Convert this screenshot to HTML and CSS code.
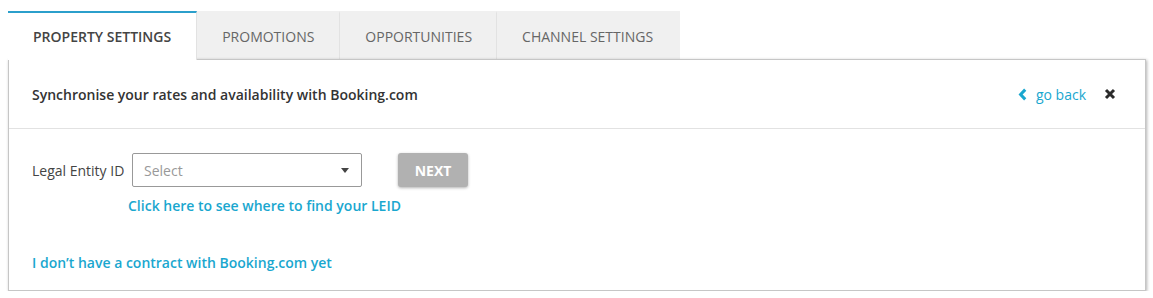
FILE: index.html
```html
<!DOCTYPE html>
<html>
<head>
<meta charset="utf-8">
<link rel="stylesheet" href="styles.css">
</head>
<body>
<div class="page">
  <nav class="tabs">
    <div class="tab active">PROPERTY SETTINGS</div>
    <div class="tab">PROMOTIONS</div>
    <div class="tab">OPPORTUNITIES</div>
    <div class="tab">CHANNEL SETTINGS</div>
  </nav>
  <section class="panel">
    <header class="panel-head">
      <h1 class="title">Synchronise your rates and availability with Booking.com</h1>
      <div class="actions">
        <a class="back" href="#">
          <svg class="chev" width="9" height="13" viewBox="0 0 9 13"><path d="M7.2 1.6 L2.6 6.5 L7.2 11.4" fill="none" stroke="#1aa7cf" stroke-width="3"/></svg>
          go back
        </a>
        <svg class="close" width="12" height="12" viewBox="0 0 12 12"><path d="M2 2 L10 10 M10 2 L2 10" stroke="#2b2b2b" stroke-width="3"/></svg>
      </div>
    </header>
    <div class="panel-body">
      <div class="row">
        <label class="label">Legal Entity ID</label>
        <div class="field">
          <div class="select">
            <span class="placeholder">Select</span>
            <span class="caret"></span>
          </div>
        </div>
        <button class="next">NEXT</button>
      </div>
      <a class="help" href="#">Click here to see where to find your LEID</a>
      <a class="nocontract" href="#">I don’t have a contract with Booking.com yet</a>
    </div>
  </section>
</div>
</body>
</html>
```

FILE: styles.css
```css
* { box-sizing: border-box; }
html, body { margin: 0; padding: 0; background: #fff; }
body {
  font-family: "Open Sans", "Liberation Sans", sans-serif;
  font-size: 14px;
  color: #333;
}
.page { padding: 11px 7px 0 8px; }
.tabs { display: flex; height: 48px; }
.tab {
  height: 48px;
  padding: 0 25px;
  display: flex;
  align-items: center;
  background: #f0f0f0;
  color: #666;
  font-size: 14px;
  border-top: 2px solid #f0f0f0;
  border-right: 1px solid #e2e2e2;
}
.tab:nth-child(3) { padding: 0 24px 0 25px; }
.tab:nth-child(4) { border-right: none; padding: 0 27px 0 25px; }
.tab.active {
  background: #fff;
  color: #444;
  font-weight: 600;
  border-top: 2px solid #2b9fcb;
  border-right: 1px solid #e2e2e2;
  padding: 0 25px 0 25px;
  position: relative;
  z-index: 2;
  margin-bottom: -1px;
  height: 49px;
}
.panel {
  border: 1px solid #c6c6c6;
  box-shadow: 1px 1px 3px rgba(0,0,0,0.3);
  height: 232px;
  background: #fff;
  position: relative;
}
.panel-head {
  height: 69px;
  border-bottom: 1px solid #e2e2e2;
  display: flex;
  align-items: center;
  justify-content: space-between;
  padding: 0 29px 0 23px;
}
.title { font-size: 14px; font-weight: 600; margin: 0; color: #333; }
.actions { display: flex; align-items: center; gap: 18px; }
.back {
  color: #1aa7cf;
  text-decoration: none;
  display: flex;
  align-items: center;
  gap: 9px;
  font-size: 14px;
}
.close { display: block; }
.panel-body { padding: 24px 24px 0 23px; display: flex; flex-direction: column; }
.row { display: flex; align-items: center; height: 34px; }
.label { color: #444; font-size: 14px; width: 100px; }
.select {
  width: 230px;
  height: 34px;
  border: 1px solid #999;
  border-radius: 2px;
  display: flex;
  align-items: center;
  justify-content: space-between;
  padding: 0 12px 0 11px;
}
.placeholder { color: #999; font-size: 14px; }
.caret {
  width: 0; height: 0;
  border-left: 4px solid transparent;
  border-right: 4px solid transparent;
  border-top: 5px solid #444;
}
.next {
  margin-left: 36px;
  width: 70px;
  height: 34px;
  border: none;
  border-radius: 3px;
  background: #b1b1b1;
  color: #fff;
  font-family: "Open Sans", "Liberation Sans", sans-serif;
  font-weight: 700;
  font-size: 14px;
  box-shadow: 0 1px 3px rgba(0,0,0,0.3);
}
.help {
  margin: 9px 0 0 96px;
  color: #1aa7cf;
  text-decoration: none;
  font-weight: 600;
  font-size: 14px;
}
.nocontract {
  margin-top: 38px;
  color: #1aa7cf;
  text-decoration: none;
  font-weight: 600;
  font-size: 14px;
}
```
